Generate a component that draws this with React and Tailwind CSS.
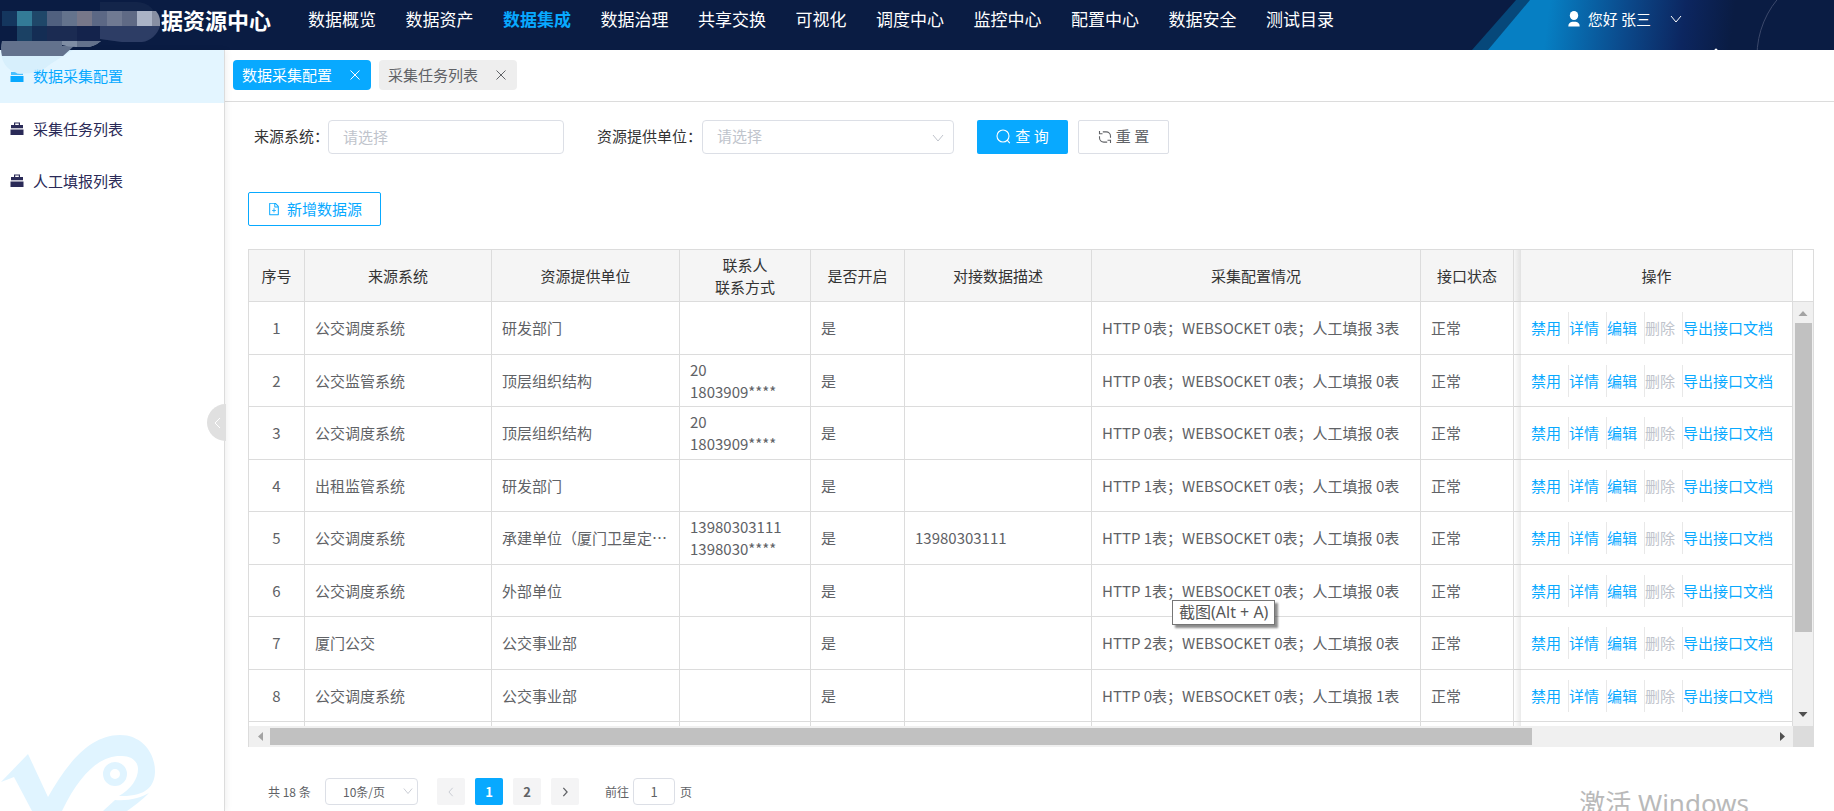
// src/App.jsx
import React from 'react';
import { AiOutlineFileAdd } from 'react-icons/ai';

const navItems = [
  '数据概览', '数据资产', '数据集成', '数据治理', '共享交换', '可视化',
  '调度中心', '监控中心', '配置中心', '数据安全', '测试目录'
];

const menuItems = ['数据采集配置', '采集任务列表', '人工填报列表'];

const columns = [
  { title: '序号', width: 'w-[56px]' },
  { title: '来源系统', width: 'w-[187px]' },
  { title: '资源提供单位', width: 'w-[188px]' },
  { title: '联系人\n联系方式', width: 'w-[131px]' },
  { title: '是否开启', width: 'w-[94px]' },
  { title: '对接数据描述', width: 'w-[187px]' },
  { title: '采集配置情况', width: '' },
  { title: '接口状态', width: 'w-[93px]' }
];

const rows = [
  { system: '公交调度系统', unit: '研发部门', contact: '', desc: '', config: 'HTTP 0表；WEBSOCKET 0表；人工填报 3表' },
  { system: '公交监管系统', unit: '顶层组织结构', contact: '20\n1803909****', desc: '', config: 'HTTP 0表；WEBSOCKET 0表；人工填报 0表' },
  { system: '公交调度系统', unit: '顶层组织结构', contact: '20\n1803909****', desc: '', config: 'HTTP 0表；WEBSOCKET 0表；人工填报 0表' },
  { system: '出租监管系统', unit: '研发部门', contact: '', desc: '', config: 'HTTP 1表；WEBSOCKET 0表；人工填报 0表' },
  { system: '公交调度系统', unit: '承建单位（厦门卫星定位）', contact: '13980303111\n1398030****', desc: '13980303111', config: 'HTTP 1表；WEBSOCKET 0表；人工填报 0表' },
  { system: '公交调度系统', unit: '外部单位', contact: '', desc: '', config: 'HTTP 1表；WEBSOCKET 0表；人工填报 0表', tip: '截图(Alt + A)' },
  { system: '厦门公交', unit: '公交事业部', contact: '', desc: '', config: 'HTTP 2表；WEBSOCKET 0表；人工填报 0表' },
  { system: '公交调度系统', unit: '公交事业部', contact: '', desc: '', config: 'HTTP 0表；WEBSOCKET 0表；人工填报 1表' }
];

const cell = 'border-r border-b border-[#dcdcdc]';

const Chevron = ({ className, d = 'M1 3l5 6 5-6' }) => (
  <svg viewBox="0 0 12 12" className={className} fill="none" stroke="currentColor" aria-hidden="true">
    <path d={d} />
  </svg>
);

const CloseIcon = () => (
  <svg viewBox="0 0 12 12" className="h-3 w-3" fill="none" stroke="currentColor" aria-hidden="true">
    <path d="M1.500 1.500l9 9M10.500 1.500l-9 9" />
  </svg>
);

const FolderIcon = () => (
  <svg viewBox="0 0 14 14" className="h-[14px] w-[14px]" fill="currentColor" aria-hidden="true">
    <path d="M1 2h5l1 1.500h6V5H1z" opacity=".7" />
    <path d="M.5 6h13v6h-13z" />
  </svg>
);

const BriefcaseIcon = () => (
  <svg viewBox="0 0 14 14" className="h-[14px] w-[14px]" fill="currentColor" aria-hidden="true">
    <path d="M4 3V.5h6V3H8.800V1.600H5.200V3z" />
    <path d="M1 3h12v3.200H1zM.5 7.500h13V13H.5z" />
  </svg>
);

const SearchIcon = () => (
  <svg viewBox="0 0 15 15" className="h-[15px] w-[15px]" fill="none" stroke="currentColor" strokeWidth="1.100" aria-hidden="true">
    <circle cx="7" cy="7" r="6" />
    <path d="M11.200 11.200l2.600 3" />
  </svg>
);

const RefreshIcon = () => (
  <svg viewBox="0 0 14 14" className="h-[14px] w-[14px]" fill="none" stroke="currentColor" strokeWidth="1.100" aria-hidden="true">
    <path d="M4.800 1.900h3.400a4.300 4.300 0 0 1 4.300 4.300v1.600" />
    <path d="M9.200 12.100H5.800a4.300 4.300 0 0 1-4.300-4.300V6.200" />
    <path d="M1.500 1v2.800h3M12.500 13v-2.800h-3" />
  </svg>
);

// Blurred-out part of the system name
const TitleMosaic = () => (
  <svg viewBox="0 0 162 76" className="pointer-events-none absolute top-0 left-0 z-10 h-[76px] w-[162px]" aria-hidden="true">
    <path d="M137 2a20 20 0 0 1 0 40h-16l-21-3V2z" fill="#1f3054" opacity=".45" />
    <path d="M100 26h60a22 22 0 0 1-18 16h-20l-22-3z" fill="#33426a" opacity=".85" />
    <g>
      <path d="M2 11h15v15H2z" fill="#14365e" />
      <path d="M17 11h15v15H17z" fill="#337b97" />
      <path d="M32 11h15v15H32z" fill="#1f4769" />
      <path d="M47 11h15v15H47z" fill="#50607f" />
      <path d="M62 11h15v15H62z" fill="#64738d" />
      <path d="M77 11h15v15H77z" fill="#777789" />
      <path d="M92 11h15v15H92z" fill="#5c6885" />
      <path d="M107 11h15v15H107z" fill="#707a92" />
      <path d="M122 11h15v15H122z" fill="#5f6a85" />
      <path d="M137 11h15v15H137z" fill="#aab3c6" />
      <path d="M152 11h4q4 5 4 10v5h-8z" fill="#878fa3" />
    </g>
    <path d="M17 26h15v15H17z" fill="#1b4164" />
    <path d="M32 26h15v15H32z" fill="#142d54" />
    <path d="M47 26h30v15H47z" fill="#1b2b52" />
    <path d="M77 26h23v15H77z" fill="#14234c" />
    <path d="M2 50h71L52 63q-12 11-32 11Q3 70 1 53z" fill="#d3edfb" opacity=".8" />
    <path d="M2 41h60v5h12l-11 10H2q-2-8 0-15z" fill="#63728d" />
    <path d="M62 41h39q-7 6-15 6H76q-8 0-14-2z" fill="#7f8da4" />
    <path d="M77 41h24q-7 6-15 6h-9z" fill="#64728c" />
  </svg>
);

const HeaderArt = () => (
  <svg viewBox="0 0 366 50" className="absolute top-0 right-0 h-[50px] w-[366px]" aria-hidden="true">
    <defs>
      <linearGradient id="art" gradientUnits="userSpaceOnUse" x1="70" y1="0" x2="265" y2="24">
        <stop offset="0" stopColor="#067fc3" />
        <stop offset=".06" stopColor="#067fc3" />
        <stop offset=".45" stopColor="#0b4a8c" />
        <stop offset=".75" stopColor="#0c2660" />
        <stop offset="1" stopColor="#0a1c43" />
      </linearGradient>
    </defs>
    <path d="M48 0h16L22 50H4z" fill="#06487a" />
    <path d="M62 0h210v50H20z" fill="url(#art)" />
    <circle cx="378" cy="56" r="89" fill="none" stroke="#3b486b" />
    <circle cx="248" cy="50" r="1.500" fill="#fff" />
  </svg>
);

const Header = () => (
  <header className="relative flex h-[50px] shrink-0 items-start bg-[#0a1c43] pr-[152px] text-white">
    <HeaderArt />
    <TitleMosaic />
    <h1 className="w-[308px] shrink-0 pl-[161px] text-[22px] leading-[38px] font-bold">据资源中心</h1>
    <nav className="flex w-[1026px] shrink-0 justify-between text-[17px] leading-[38px] whitespace-nowrap">
      {navItems.map(item => (
        <a key={item} href="#" className={item === '数据集成' ? 'font-bold text-[#08a9ff]' : ''}>{item}</a>
      ))}
    </nav>
    <button type="button" className="relative ml-auto flex h-[38px] items-center text-[15px] whitespace-nowrap">
      <svg viewBox="0 0 12 16" className="mr-2 h-4 w-3" fill="currentColor" aria-hidden="true">
        <ellipse cx="6" cy="4.500" rx="4.200" ry="4.500" />
        <path d="M.3 15.500c0-3 1.500-4.500 4-4.800h3.400c2.500.3 4 1.800 4 4.800z" />
      </svg>
      您好 张三
      <Chevron className="ml-[19px] h-3 w-3" />
    </button>
  </header>
);

const Sidebar = () => (
  <aside className="relative flex w-[225px] shrink-0 flex-col border-r border-[#dcdcdc] shadow-[2px_0_6px_rgba(0,0,0,0.06)]">
    {menuItems.map((item, i) => (
      <a
        key={item}
        href="#"
        className={i === 0
          ? 'flex h-[53px] items-center gap-[9px] bg-[#e3f5ff] pl-[10px] text-[#08a9ff]'
          : 'flex h-[52px] items-center gap-[9px] pl-[10px] text-[#2a2a57]'}
      >
        {i === 0 ? <FolderIcon /> : <BriefcaseIcon />}
        {item}
      </a>
    ))}
    <svg viewBox="0 0 170 76" className="mt-auto h-[76px] w-[170px]" aria-hidden="true">
      <path d="M1 47l27-28 20 43C65 32 88 0 120 0c22 0 35 18 35 36 0 16-10 26-36 25 12-7 19-17 19-27 0-8-7-13-16-13-20-1-41 15-60 55H32L14 42z" fill="#e0f4ff" />
      <path d="M115 65c14 1 25-2 34-7-7 7-14 12-22 18h-24z" fill="#e0f4ff" />
      <circle cx="115" cy="39" r="8.500" fill="none" stroke="#e0f4ff" strokeWidth="7" />
    </svg>
    <button
      type="button"
      aria-label="收起菜单"
      className="absolute top-[354px] -right-[2px] flex h-[37px] w-[19px] items-center justify-center rounded-l-full bg-[#e0e0e0] text-white"
    >
      <Chevron className="h-3 w-3" d="M9 1L4 6l5 5" />
    </button>
  </aside>
);

const Tabs = () => (
  <div className="flex h-[52px] shrink-0 items-start gap-2 border-b border-[#dcdcdc] pt-[10px] pl-2">
    <div className="flex h-[30px] w-[138px] items-center justify-between rounded bg-[#08a9ff] px-[9px] text-white">
      数据采集配置
      <button type="button" aria-label="关闭数据采集配置" className="pr-px"><CloseIcon /></button>
    </div>
    <div className="flex h-[30px] w-[138px] items-center justify-between rounded bg-[#eee] px-[9px] text-[#606266]">
      采集任务列表
      <button type="button" aria-label="关闭采集任务列表" className="pr-px"><CloseIcon /></button>
    </div>
  </div>
);

const Filters = () => (
  <form className="flex h-[35px] shrink-0 items-center pl-[6px]">
    <label htmlFor="source" className="w-[74px] shrink-0 whitespace-nowrap text-[#333]">来源系统：</label>
    <input
      id="source"
      type="text"
      placeholder="请选择"
      className="h-[34px] w-[236px] rounded border border-[#dcdfe6] px-[14px] outline-none placeholder:text-[#c0c4cc]"
    />
    <label htmlFor="unit" className="ml-[33px] w-[105px] shrink-0 whitespace-nowrap text-[#333]">资源提供单位：</label>
    <div className="relative">
      <select
        id="unit"
        className="h-[34px] w-[252px] appearance-none rounded border border-[#dcdfe6] bg-white px-[14px] text-[#c0c4cc] outline-none"
      >
        <option>请选择</option>
      </select>
      <Chevron className="pointer-events-none absolute top-3 right-[10px] h-3 w-3 text-[#c0c4cc]" />
    </div>
    <button type="button" className="ml-[23px] flex h-[34px] w-[91px] items-center justify-center gap-1 rounded-xs bg-[#08a9ff] text-white">
      <SearchIcon />
      查 询
    </button>
    <button type="button" className="ml-[10px] flex h-[34px] w-[91px] items-center justify-center gap-1 rounded-xs border border-[#dcdfe6] text-[#606266]">
      <RefreshIcon />
      重 置
    </button>
  </form>
);

const Actions = () => (
  <div className="flex items-center text-[#08a9ff]">
    {['禁用', '详情', '编辑', '删除'].map(name => (
      <div key={name} className="flex h-8 w-[38px] shrink-0 items-center border-r border-[#e8e8e8]">
        <button type="button" disabled={name === '删除'} className="whitespace-nowrap disabled:text-[#c0c4cc]">{name}</button>
      </div>
    ))}
    <button type="button" className="whitespace-nowrap">导出接口文档</button>
  </div>
);

const SourceTable = () => (
  <div className="mt-[23px] flex min-h-0 flex-1 border-t border-l border-[#dcdcdc]">
    <div className="flex min-w-0 flex-1 flex-col">
      <div className="min-h-0 flex-1 overflow-hidden">
        <table className="w-full table-fixed border-separate border-spacing-0 leading-[22px] text-[#606266]">
          <colgroup>
            {columns.map(col => <col key={col.title} className={col.width} />)}
            <col className="w-[7px]" />
            <col className="w-[272px]" />
          </colgroup>
          <thead>
            <tr className="h-[52px] bg-[#f5f5f5] text-[#333]">
              {columns.map(col => (
                <th key={col.title} className={`${cell} font-normal whitespace-pre-line`}>{col.title}</th>
              ))}
              <th className="border-b border-[#d4d4d4] bg-linear-to-r from-transparent to-black/8" />
              <th className={`${cell} font-normal`}>操作</th>
            </tr>
          </thead>
          <tbody>
            {rows.map((row, i) => (
              <tr key={i} className="odd:h-[53px] even:h-[52px]">
                <td className={`${cell} text-center`}>{i + 1}</td>
                <td className={`${cell} px-[10px]`}>{row.system}</td>
                <td className={`${cell} truncate px-[10px]`}>{row.unit}</td>
                <td className={`${cell} px-[10px] whitespace-pre-line`}>{row.contact}</td>
                <td className={`${cell} px-[10px]`}>是</td>
                <td className={`${cell} px-[10px]`}>{row.desc}</td>
                <td className={`${cell} relative px-[10px] whitespace-nowrap`}>
                  {row.config}
                  {row.tip && (
                    <span
                      role="tooltip"
                      className="absolute top-[35px] left-[80px] z-10 border border-[#767676] bg-white px-[6px] font-['Noto_Sans','Noto_Sans_CJK_SC',sans-serif] text-[16px] leading-[23px] text-[#575757] shadow-[3px_3px_2px_rgba(0,0,0,0.45)]"
                    >
                      {row.tip}
                    </span>
                  )}
                </td>
                <td className={`${cell} px-[10px]`}>正常</td>
                <td className="border-b border-[#d4d4d4] bg-linear-to-r from-transparent to-black/8" />
                <td className={`${cell} pl-[10px]`}><Actions /></td>
              </tr>
            ))}
            <tr className="h-[53px]">
              {columns.map(col => <td key={col.title} className={cell} />)}
              <td className="bg-linear-to-r from-transparent to-black/8" />
              <td className={cell} />
            </tr>
          </tbody>
        </table>
      </div>
      {/* horizontal scrollbar */}
      <div className="flex h-[21px] shrink-0 items-center bg-[#f0f0f0]">
        <svg viewBox="0 0 21 21" className="h-[21px] w-[21px] shrink-0" aria-hidden="true">
          <path d="M14 6v9l-5-4.500z" fill="#a3a3a3" />
        </svg>
        <div className="flex-1">
          <div className="h-[17px] w-[84%] bg-[#c1c1c1]" />
        </div>
        <svg viewBox="0 0 21 21" className="h-[21px] w-[21px] shrink-0" aria-hidden="true">
          <path d="M8 6v9l5-4.500z" fill="#505050" />
        </svg>
      </div>
    </div>
    {/* vertical scrollbar */}
    <div className="flex w-[21px] shrink-0 flex-col">
      <div className="h-[52px] shrink-0 border-r border-b border-[#dcdcdc]" />
      <div className="flex min-h-0 flex-1 flex-col items-center border-r border-[#dcdcdc] bg-[#f0f0f0]">
        <svg viewBox="0 0 20 21" className="h-[21px] w-5 shrink-0" aria-hidden="true">
          <path d="M5.500 14h9L10 9z" fill="#a3a3a3" />
        </svg>
        <div className="w-[17px] flex-1">
          <div className="h-[81%] bg-[#c1c1c1]" />
        </div>
        <svg viewBox="0 0 20 21" className="h-[21px] w-5 shrink-0" aria-hidden="true">
          <path d="M5.500 7h9L10 12z" fill="#505050" />
        </svg>
      </div>
      <div className="h-[21px] shrink-0 bg-[#dcdcdc]" />
    </div>
  </div>
);

const pageBtn = 'flex h-[27px] w-[28px] items-center justify-center rounded-xs text-[13px] font-bold';

const Pagination = () => (
  <div className="mt-[31px] mb-[6px] flex shrink-0 items-center pl-5 text-[12px] text-[#606266]">
    <span className="w-[57px]">共 18 条</span>
    <div className="relative">
      <select aria-label="每页条数" className="h-[27px] w-[93px] appearance-none rounded border border-[#dcdfe6] bg-white pl-[17px] outline-none">
        <option>10条/页</option>
      </select>
      <Chevron className="pointer-events-none absolute top-2 right-[5px] h-[10px] w-[10px] text-[#c0c4cc]" />
    </div>
    <div className="ml-[19px] flex gap-[10px]">
      <button type="button" aria-label="上一页" disabled className={`${pageBtn} bg-[#f4f4f5] text-[#c0c4cc]`}>
        <Chevron className="h-[10px] w-[10px]" d="M8 1L3.500 6 8 11" />
      </button>
      <button type="button" className={`${pageBtn} bg-[#08a9ff] text-white`}>1</button>
      <button type="button" className={`${pageBtn} bg-[#f4f4f5]`}>2</button>
      <button type="button" aria-label="下一页" className={`${pageBtn} bg-[#f4f4f5]`}>
        <svg viewBox="0 0 12 12" className="h-[10px] w-[10px]" fill="none" stroke="currentColor" strokeWidth="1.500" aria-hidden="true">
          <path d="M4 1l4.500 5L4 11" />
        </svg>
      </button>
    </div>
    <label htmlFor="page" className="ml-[26px] w-[28px] whitespace-nowrap">前往</label>
    <input id="page" type="text" defaultValue="1" className="h-[27px] w-[42px] rounded border border-[#dcdfe6] text-center text-[13px] outline-none" />
    <span className="ml-[5px]">页</span>
  </div>
);

const App = () => {
  return (
    <div lang="zh-CN" className="relative flex h-screen flex-col overflow-hidden bg-white font-['Noto_Sans_CJK_SC',sans-serif] text-[15px]">
      <Header />
      <div className="flex min-h-0 flex-1">
        <Sidebar />
        <main className="flex min-w-0 flex-1 flex-col">
          <Tabs />
          <section className="flex min-h-0 flex-1 flex-col pt-[17px] pr-5 pl-[23px]">
            <Filters />
            <button type="button" className="mt-[38px] flex h-[34px] w-[133px] shrink-0 items-center justify-center gap-[6px] rounded-xs border border-[#08a9ff] text-[#08a9ff]">
              <AiOutlineFileAdd className="h-[14px] w-[14px]" />
              新增数据源
            </button>
            <SourceTable />
            <Pagination />
          </section>
        </main>
      </div>
      <div className="pointer-events-none absolute right-[85px] -bottom-[10px] font-['Noto_Sans','Noto_Sans_CJK_SC',sans-serif] text-[26px] leading-[36px] text-[#b9b9b9]">
        激活 Windows
      </div>
    </div>
  );
};

export default App;
